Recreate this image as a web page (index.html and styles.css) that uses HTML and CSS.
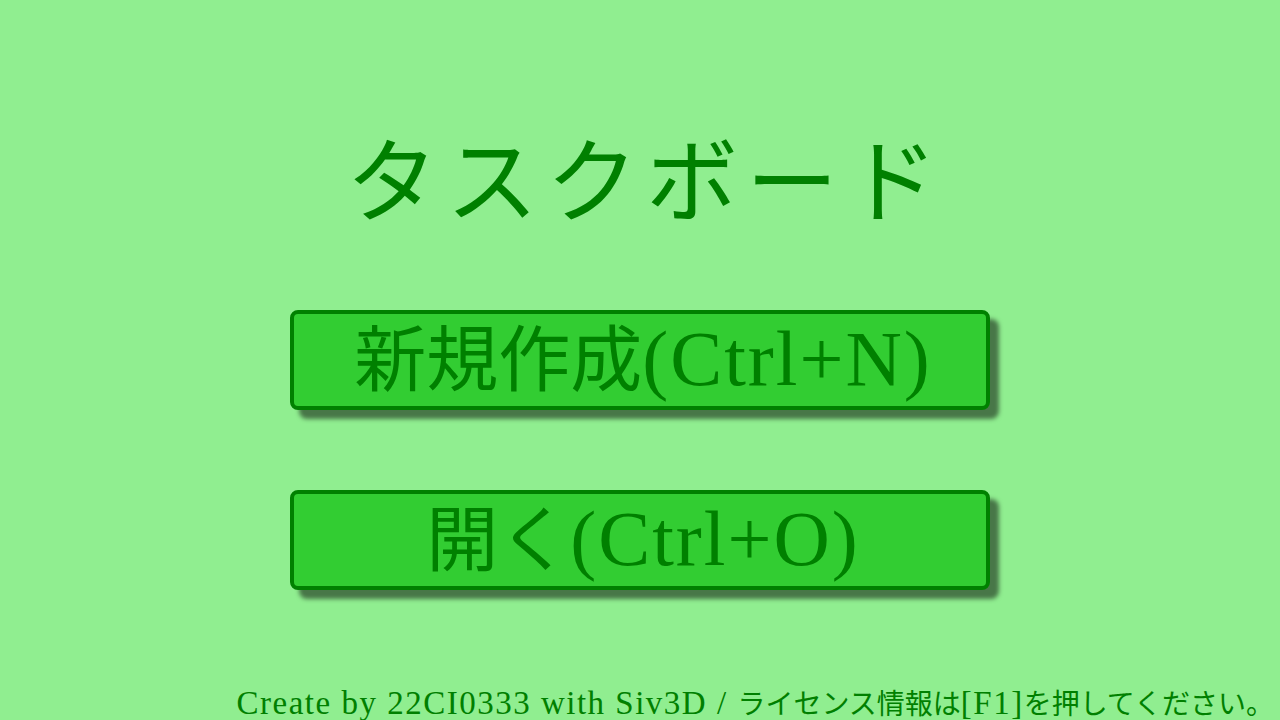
FILE: index.html
```html
<!DOCTYPE html>
<html lang="ja">
<head>
<meta charset="utf-8">
<title>タスクボード</title>
<link rel="stylesheet" href="styles.css">
</head>
<body>
<main class="screen">
  <h1 class="title">タスクボード</h1>
  <div class="menu">
    <div class="btn"><span class="label">新規作成<span class="lat">(Ctrl+N)</span></span></div>
    <div class="btn"><span class="label">開く<span class="lat">(Ctrl+O)</span></span></div>
  </div>
  <footer class="footer"><span class="lat">Create by 22CI0333 with Siv3D / </span>ライセンス情報は<span class="lat">[F1]</span>を押してください。</footer>
</main>
</body>
</html>
```

FILE: styles.css
```css
html, body {
  margin: 0;
  padding: 0;
}
body {
  background: #90ee90;
  color: #008000;
  font-family: "Liberation Serif", "Noto Sans CJK JP", serif;
}
.screen {
  width: 1280px;
  height: 720px;
  display: flex;
  flex-direction: column;
  align-items: center;
  overflow: hidden;
}
.title {
  margin: 124px 0 0 0;
  height: 120px;
  font-size: 92px;
  line-height: 120px;
  font-weight: normal;
  letter-spacing: 8px;
  padding-left: 12px;
}
.menu {
  margin-top: 66px;
  display: flex;
  flex-direction: column;
  gap: 80px;
}
.btn {
  box-sizing: border-box;
  width: 700px;
  height: 100px;
  border: 4px solid #008000;
  border-radius: 8px;
  background: #32cd32;
  box-shadow: 9px 9px 4px rgba(0, 0, 0, 0.5);
  display: flex;
  align-items: center;
  justify-content: center;
}
.label {
  font-size: 72px;
  line-height: 92px;
  padding-left: 6px;
}
.label .lat {
  font-size: 78px;
  letter-spacing: 2px;
}
.footer {
  margin-top: auto;
  align-self: flex-end;
  padding-right: 6px;
  font-size: 28px;
  line-height: 30px;
  white-space: nowrap;
}
.footer .lat {
  font-size: 33px;
  letter-spacing: 1.5px;
}
```
